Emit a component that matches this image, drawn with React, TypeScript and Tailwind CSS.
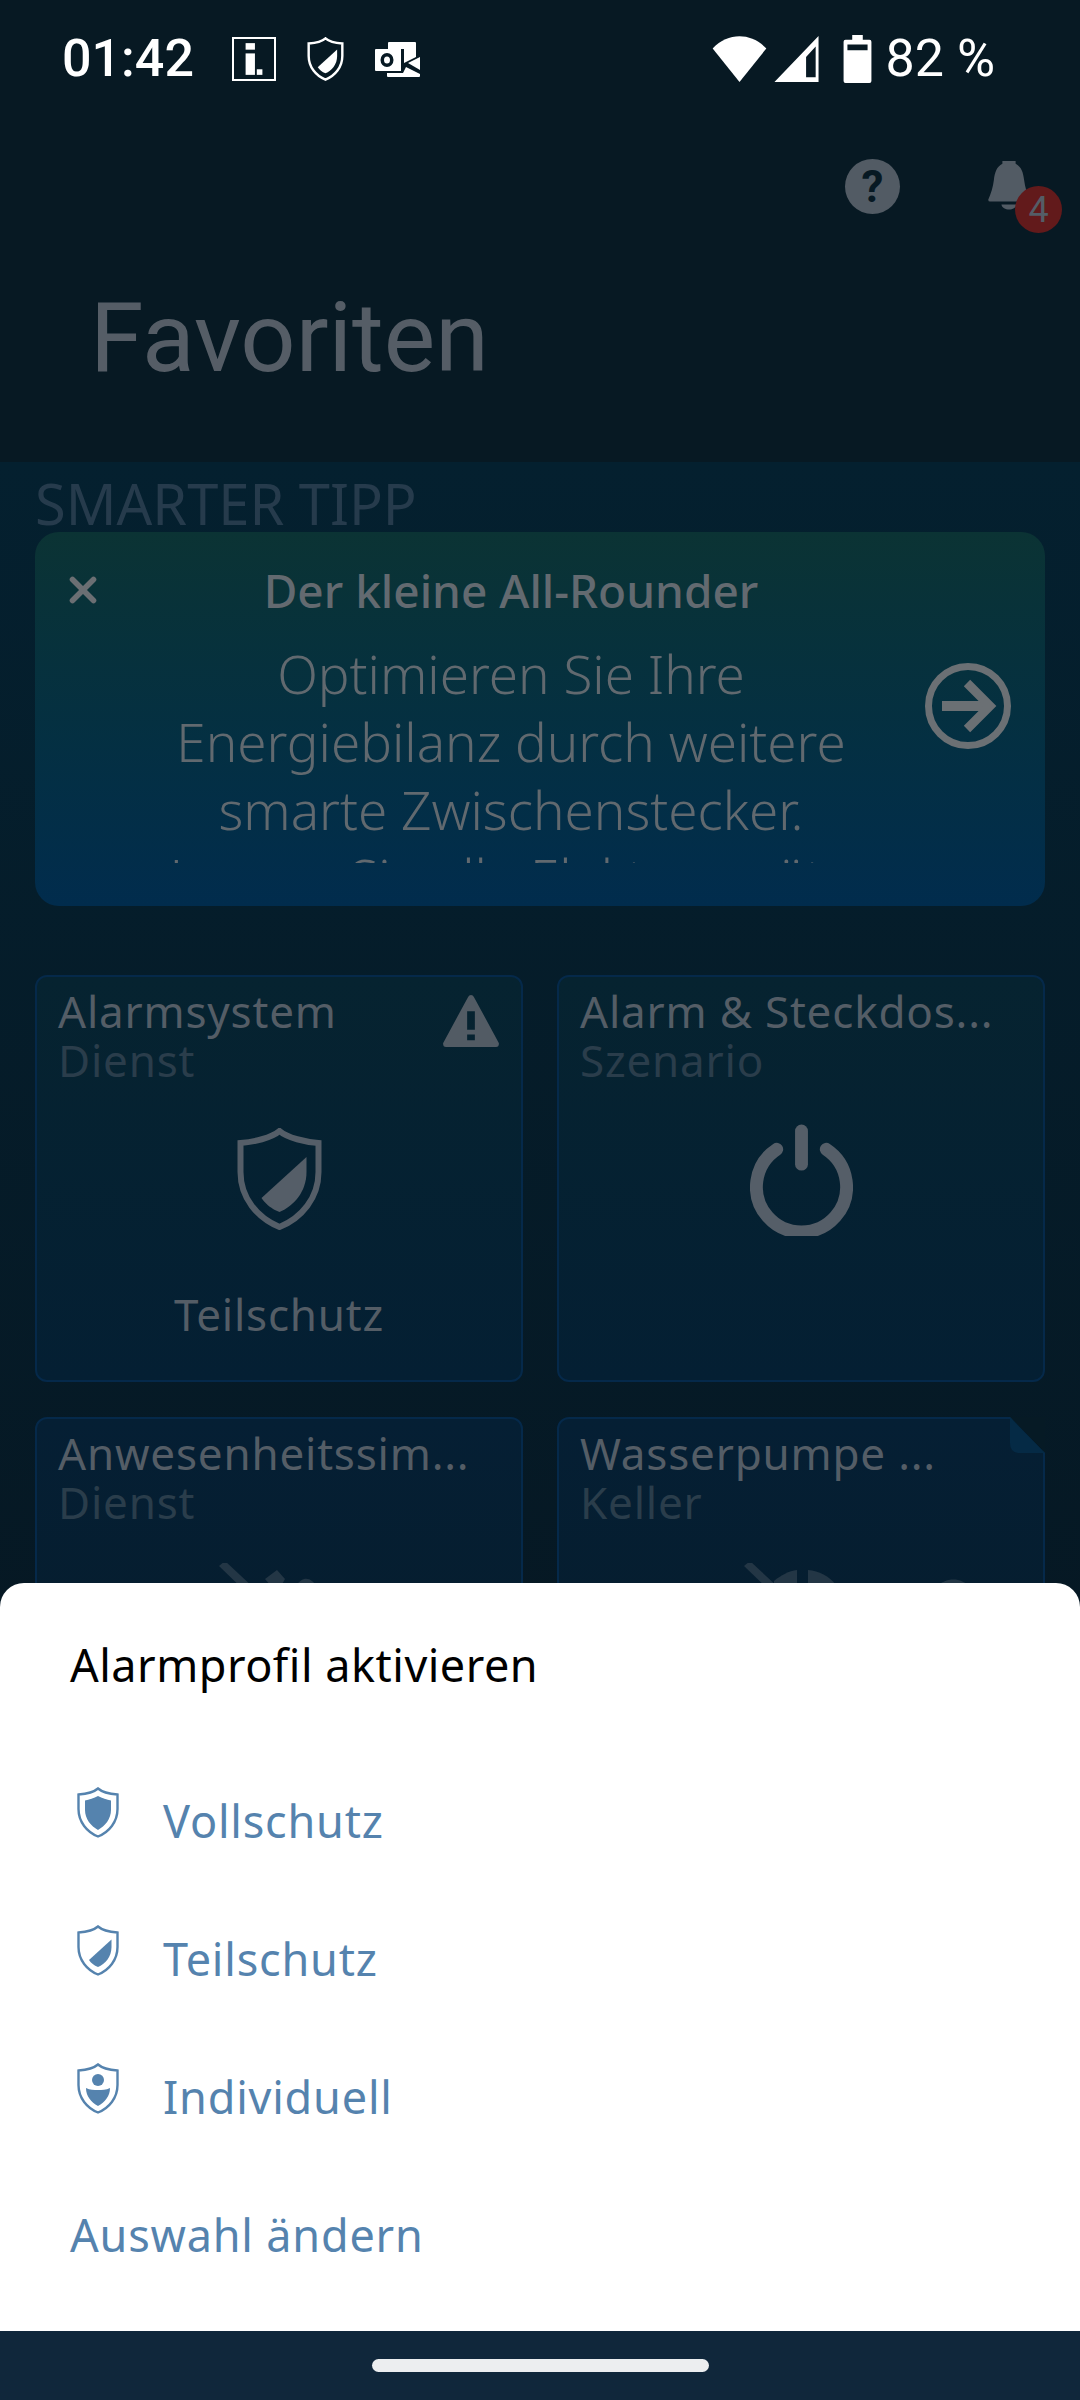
import type { ReactNode } from 'react';
import { X } from 'lucide-react';

const SHIELD = 'M21 1.500 C17 5 8 7 1.500 7.500 V22 C1.500 35 10 45 21 49.500 C32 45 40.500 35 40.500 22 V7.500 C34 7 25 5 21 1.500 Z';
const SHIELD_PART = 'M34.500 14.500 V22 C34.500 32 28 39 21 42 C17 40.500 14 38 12 35 Z';

function Shield({ kind, stroke = 2.400, className }: { kind: 'full' | 'part' | 'custom'; stroke?: number; className: string }) {
  return (
    <svg viewBox="0 0 42 51" className={className} fill="currentColor">
      <path d={SHIELD} fill="none" stroke="currentColor" strokeWidth={stroke} />
      {kind === 'full' && <path d="M21 9 C17 11 12 13 8 13.500 V23 C8 32 14 39 21 43 C28 39 34 32 34 23 V13.500 C30 13 25 11 21 9 Z" />}
      {kind === 'part' && <path d={SHIELD_PART} />}
      {kind === 'custom' && (
        <>
          <circle cx="21" cy="17" r="6" />
          <path d="M9 25 C13 27 17 27 21 27 C25 27 29 27 33 25 C33 33 28 39 21 43 C14 39 9 33 9 25 Z" />
        </>
      )}
    </svg>
  );
}

function StatusBar() {
  return (
    <div className="flex h-[118px] items-center justify-between pl-[62px] pr-[85px] font-['Roboto',sans-serif] text-white">
      <div className="flex items-center">
        <span className="w-[170px] text-[52px] font-medium leading-none">01:42</span>
        <div className="flex h-[44px] w-[44px] items-center justify-center border-2 border-white">
          <svg viewBox="0 0 30 34" className="h-[32px] w-[28px]" fill="currentColor">
            <rect x="6" y="0" width="10" height="7" />
            <rect x="6" y="11" width="10" height="23" />
            <rect x="18" y="28" width="6" height="6" />
          </svg>
        </div>
        <Shield kind="part" stroke={2.800} className="ml-[31px] h-[44px] w-[37px]" />
        <svg viewBox="0 0 45 35" className="ml-[31px] h-[35px] w-[45px]" fill="currentColor">
          <path d="M13 1 Q13 0 14 0 H40 Q41 0 41 1 V15 L29 21 V7 H13 Z" />
          <path d="M45 15 V28 L33 21 Z" />
          <path d="M12 31 H28 L31 25 L45 32 V34 Q45 35 44 35 H13 Q12 35 12 34 Z" />
          <path fillRule="evenodd" d="M1 7 H26 V29 H1 Q0 29 0 28 V8 Q0 7 1 7 Z M12 11 A6.500 7 0 1 0 12 25 A6.500 7 0 1 0 12 11 Z M12 14.500 A3 3.500 0 1 1 12 21.500 A3 3.500 0 1 1 12 14.500 Z" />
        </svg>
      </div>
      <div className="flex items-center">
        <svg viewBox="0 0 56 48" className="h-[46px] w-[55px]" fill="currentColor">
          <path d="M0 13 C16 -4 40 -4 56 13 L28 48 Z" />
        </svg>
        <svg viewBox="0 0 46 48" className="ml-[6px] h-[46px] w-[47px]" fill="currentColor">
          <path fillRule="evenodd" d="M46 0 V48 H0 Z M43 11 L33 22 V43 H43 Z" />
        </svg>
        <svg viewBox="0 0 29 50" className="ml-[23px] h-[48px] w-[29px]" fill="currentColor">
          <path fillRule="evenodd" d="M9 0 H20 V5 H27 Q29 5 29 7 V48 Q29 50 27 50 H2 Q0 50 0 48 V7 Q0 5 2 5 H9 Z M4 10 V16 H25 V10 Z" />
        </svg>
        <span className="ml-[14px] text-[52px] font-normal leading-none">82 %</span>
      </div>
    </div>
  );
}

function Tile({ title, sub, className, children }: { title: string; sub: string; className: string; children?: ReactNode }) {
  return (
    <div className={`relative h-[407px] rounded-[12px] border-2 border-[#05294a] bg-gradient-to-b px-[21px] pt-[9px] ${className}`}>
      <div className="whitespace-nowrap text-[44px] leading-[50px] tracking-[0.8px] text-[#545d66]">{title}</div>
      <div className="text-[44px] leading-[48px] tracking-[0.8px] text-[#2a3d4b]">{sub}</div>
      {children}
    </div>
  );
}

export default function App() {
  return (
    <div className="relative h-[2400px] w-[1080px] overflow-hidden bg-[#061821] font-['Noto_Sans',sans-serif]">
      <div className="h-[462px] bg-[#071923]">
        <StatusBar />
        <div className="flex justify-end pr-[50px] pt-[41px]">
          <div className="mr-[88px] flex h-[55px] w-[55px] items-center justify-center rounded-full bg-[#525b64] font-['Roboto',sans-serif] text-[44px] font-bold leading-none text-[#071923]">?</div>
          <div className="relative h-[55px] w-[42px]">
            <svg viewBox="0 0 44 54" className="mt-[2px] h-[51px] w-[42px] text-[#525b64]" fill="currentColor">
              <path d="M15 0 H29 V3 C35 6 37 12 38 20 C39 28 41 34 44 41 Q44 43 42 43 H2 Q0 43 0 41 C3 34 5 28 6 20 C7 12 9 6 15 3 Z" />
              <path d="M14 46 H30 C29 53 15 53 14 46 Z" />
            </svg>
            <div className="absolute left-[27px] top-[27px] flex h-[47px] w-[47px] items-center justify-center rounded-full bg-[#621a1b] font-['Roboto',sans-serif] text-[36px] leading-none text-[#545d66]">4</div>
          </div>
        </div>
        <h1 className="pl-[90px] pt-[74px] font-['Roboto',sans-serif] text-[97px] font-normal leading-[100px] text-[#555d66]">Favoriten</h1>
      </div>

      <div className="bg-gradient-to-b from-[#04202f] to-[#061722] px-[35px] pt-[16px]">
        <div className="text-[56px] leading-[50px] text-[#263b4c]">SMARTER TIPP</div>
        <div className="relative mt-[4px] h-[374px] rounded-[24px] bg-gradient-to-b from-[#0b3334] to-[#012c4d]">
          <X className="absolute left-[27px] top-[37px] h-[42px] w-[42px] text-[#6b6f73]" strokeWidth={3.200} />
          <div className="pr-[58px] pt-[36px] text-center text-[46px] font-medium leading-[44px] text-[#636a70]">Der kleine All-Rounder</div>
          <div className="mt-[28px] h-[223px] overflow-hidden whitespace-nowrap pr-[58px] text-center text-[53px] font-light leading-[68px] text-[#61696f]">
            Optimieren Sie Ihre
            <br />
            Energiebilanz durch weitere
            <br />
            smarte Zwischenstecker.
            <br />
            Lassen Sie alle Elektrogeräte
          </div>
          <svg viewBox="0 0 86 86" className="absolute left-[890px] top-[131px] h-[86px] w-[86px] text-[#6b7074]" fill="none" stroke="currentColor">
            <circle cx="43" cy="43" r="39.500" strokeWidth="7" />
            <path d="M17 43 H62" strokeWidth="10" />
            <path d="M42 20 L65 43 L42 66" strokeWidth="9" />
          </svg>
        </div>

        <div className="mt-[69px] grid grid-cols-2 gap-x-[34px] gap-y-[35px]">
          <Tile title="Alarmsystem" sub="Dienst" className="from-[#062330] to-[#041f33]">
            <svg viewBox="0 0 58 54" className="absolute right-[21px] top-[18px] h-[52px] w-[58px] text-[#525b64]" fill="currentColor">
              <path fillRule="evenodd" d="M29 0 Q31 0 32 2 L58 50 Q58 54 55 54 H3 Q0 54 0 50 L26 2 Q27 0 29 0 Z M25 17 V36 H33 V17 Z M25 41 V47 H33 V41 Z" />
            </svg>
            <div className="mt-[44px] flex justify-center">
              <Shield kind="part" stroke={3} className="h-[102px] w-[85px] text-[#555e68]" />
            </div>
            <div className="mt-[59px] text-center text-[44px] leading-[50px] tracking-[0.8px] text-[#545d66]">Teilschutz</div>
          </Tile>
          <Tile title="Alarm & Steckdos..." sub="Szenario" className="from-[#062330] to-[#041f33]">
            <svg viewBox="0 0 104 112" className="mx-auto mt-[40px] block h-[112px] w-[103px] text-[#555e68]" fill="none" stroke="currentColor" strokeLinecap="round">
              <path d="M52 6.500 V40" strokeWidth="13" />
              <path d="M27 25 A45.500 45.500 0 1 0 77 25" strokeWidth="13" />
            </svg>
          </Tile>
          <Tile title="Anwesenheitssim..." sub="Dienst" className="from-[#051f34] to-[#061c2a]">
            <svg viewBox="0 0 120 40" className="ml-[161px] mt-[37px] block h-[40px] w-[120px] text-[#233645]" fill="currentColor">
              <path d="M0 3 L6 -2 L36 26 L30 32 Z" />
              <path d="M46 16 L58 7 L66 16 L58 30 Z" />
              <path d="M76 24 C84 12 92 14 98 24 L92 30 C90 24 86 24 82 30 Z" />
            </svg>
          </Tile>
          <Tile title="Wasserpumpe ..." sub="Keller" className="from-[#051f34] to-[#061c2a]">
            <svg viewBox="0 0 35 36" className="absolute right-[-2px] top-[-2px] h-[36px] w-[35px]">
              <path d="M0 0 H35 V36 Z" fill="#061a25" />
              <path d="M0 0 L35 36 H10 Q0 36 0 26 Z" fill="#052a45" />
            </svg>
            <svg viewBox="0 0 240 40" className="ml-[161px] mt-[37px] block h-[40px] w-[240px] text-[#233645]" fill="currentColor">
              <path d="M3 3 L9 -2 L39 26 L33 32 Z" />
              <path d="M33 18 C40 12 48 8 56 7 V30 H33 Z" />
              <path d="M67 7 C78 8 88 13 95 22 V30 H67 Z" />
              <path d="M195 24 C205 14 220 14 229 24 V30 H195 Z" />
            </svg>
          </Tile>
        </div>
      </div>

      <div className="absolute inset-x-0 bottom-0 z-10">
        <div className="h-[748px] rounded-t-[24px] bg-white px-[70px] pt-[58px]">
          <div className="text-[45px] leading-[48px] tracking-[0.5px] text-black">Alarmprofil aktivieren</div>
          <div className="mt-[54px] flex flex-col text-[#5583ae]">
            {([
              ['full', 'Vollschutz'],
              ['part', 'Teilschutz'],
              ['custom', 'Individuell'],
            ] as const).map(([kind, label]) => (
              <div key={label} className="flex h-[138px] items-center">
                <Shield kind={kind} className="ml-[7px] h-[51px] w-[42px]" />
                <span className="ml-[44px] mt-[17px] text-[45px] leading-none tracking-[0.8px]">{label}</span>
              </div>
            ))}
            <div className="flex h-[138px] items-center">
              <span className="mt-[17px] text-[45px] leading-none tracking-[0.8px]">Auswahl ändern</span>
            </div>
          </div>
        </div>
        <div className="flex h-[69px] items-center justify-center bg-[#10273b]">
          <div className="h-[13px] w-[337px] rounded-full bg-[#eceef0]" />
        </div>
      </div>
    </div>
  );
}
